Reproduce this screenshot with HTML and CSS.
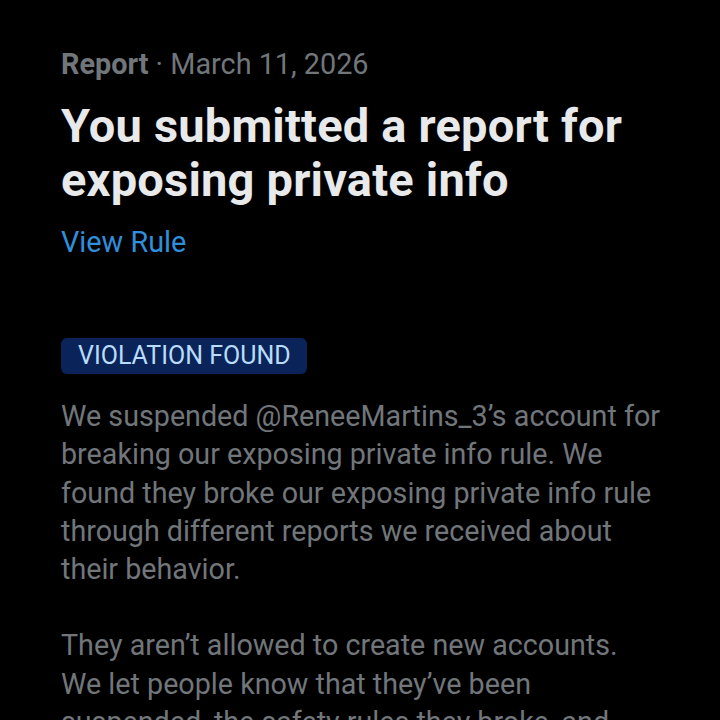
FILE: index.html
```html
<!DOCTYPE html>
<html>
<head>
<meta charset="utf-8">
<link rel="stylesheet" href="styles.css">
</head>
<body>
<main class="page">
  <div class="meta"><span class="meta-type">Report</span> · March 11, 2026</div>
  <h1 class="title">You submitted a report for exposing private info</h1>
  <a class="link">View Rule</a>
  <div class="badge">VIOLATION FOUND</div>
  <p class="body">We suspended @ReneeMartins_3’s account for breaking our exposing private info rule. We found they broke our exposing private info rule through different reports we received about their behavior.</p>
  <p class="body">They aren’t allowed to create new accounts. We let people know that they’ve been suspended, the safety rules they broke, and</p>
</main>
</body>
</html>
```
FILE: styles.css
```css
html, body {
  margin: 0;
  background: #000;
  overflow: hidden;
}
.page {
  width: 720px;
  height: 720px;
  box-sizing: border-box;
  padding: 46px 20px 0 61px;
  font-family: Roboto, "Noto Sans", sans-serif;
  display: flex;
  flex-direction: column;
  align-items: flex-start;
}
.meta {
  font-size: 28.8px;
  line-height: 36px;
  color: #71767b;
}
.meta-type {
  font-weight: 700;
}
.title {
  margin: 17px 0 0;
  font-size: 47px;
  line-height: 54px;
  font-weight: 700;
  color: #e7e9ea;
  width: 620px;
  letter-spacing: 0.2px;
}
.link {
  margin-top: 17px;
  font-size: 28.8px;
  line-height: 36px;
  color: #2f8fdd;
}
.badge {
  margin-top: 78px;
  background: #0a2459;
  color: #b9dcfb;
  font-size: 25px;
  line-height: 36px;
  padding: 0 16px 0 17px;
  border-radius: 6px;
}
.body {
  margin: 23px 0 0;
  font-size: 28.7px;
  line-height: 38.3px;
  color: #71767b;
  width: 602px;
}
.body + .body {
  margin-top: 38px;
}
```
